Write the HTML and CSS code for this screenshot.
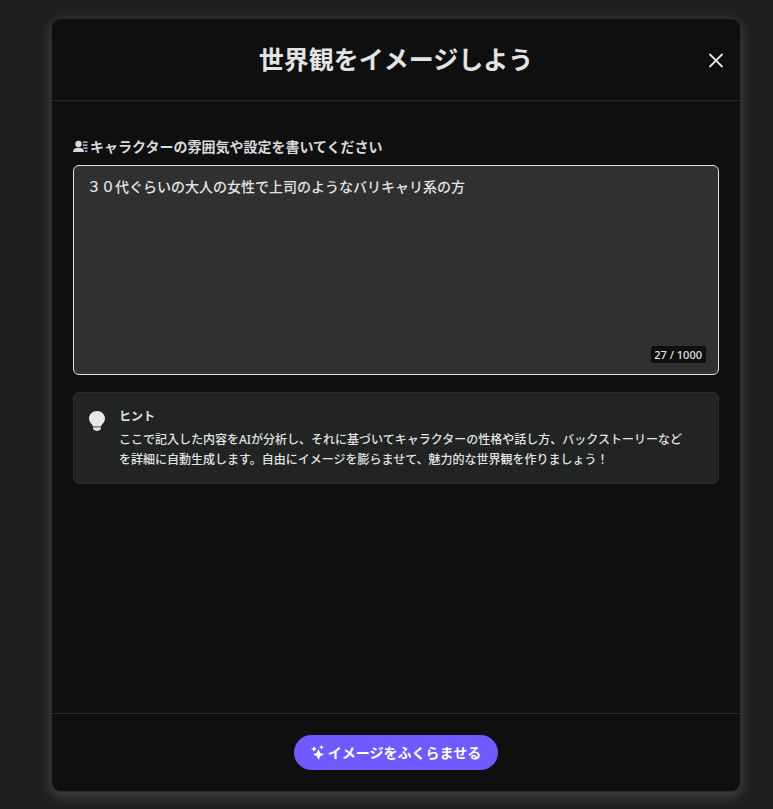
FILE: index.html
```html
<!DOCTYPE html>
<html lang="ja">
<head>
  <meta charset="utf-8">
  <meta name="viewport" content="width=device-width, initial-scale=1">
  <title>世界観をイメージしよう</title>
  <link rel="stylesheet" href="styles.css">
</head>
<body>
  <div class="modal" role="dialog" aria-labelledby="modalTitle">
    <header class="modal-header">
      <h1 id="modalTitle">世界観をイメージしよう</h1>
      <button type="button" class="close-btn" aria-label="閉じる">
        <svg viewBox="0 0 16 16" width="16" height="16" fill="none" stroke="currentColor" stroke-width="1.8">
          <path d="M1.500 2l13 13M14.500 2l-13 13"/>
        </svg>
      </button>
    </header>

    <main class="modal-body">
      <label for="worldview" class="field-label">
        <svg viewBox="0 0 15 14" width="15" height="14" fill="currentColor">
          <circle cx="5.500" cy="4" r="3.200"/>
          <path d="M0 12c0-3 2.500-4.300 5.500-4.300S11 9 11 12z"/>
          <path d="M9.800 1.500H14.500v1.300H9.800zM9.800 4.500H14.500v1.300H9.800zM10.500 7.500h4v1.300h-4zM12 10.500h2.500v1.300H12z"/>
        </svg>
        キャラクターの雰囲気や設定を書いてください
      </label>
      <div class="textarea-wrap">
        <textarea id="worldview" maxlength="1000">３０代ぐらいの大人の女性で上司のようなバリキャリ系の方</textarea>
        <span class="counter">27 / 1000</span>
      </div>

      <section class="hint">
        <svg class="hint-icon" viewBox="0 0 16 20" width="16" height="20">
          <path fill="#e6e7e9" d="M8 0C3.500 0 0 3.400 0 7.600c0 2.600 1.500 4.300 2.900 5.900.7.700 1 1.300 1.100 2h8c.1-.7.400-1.300 1.100-2C14.500 11.900 16 10.200 16 7.600 16 3.400 12.500 0 8 0z"/>
          <path fill="#9a9c9c" d="M4 15.500h8V17H4z"/>
          <path fill="#e6e7e9" d="M4 17h8c0 1.200-.6 2-2 2.200-.4.500-1 .800-2 .800s-1.600-.3-2-.8C4.600 19 4 18.200 4 17z"/>
        </svg>
        <div class="hint-text">
          <h2>ヒント</h2>
          <p>ここで記入した内容をAIが分析し、それに基づいてキャラクターの性格や話し方、バックストーリーなどを詳細に自動生成します。自由にイメージを膨らませて、魅力的な世界観を作りましょう！</p>
        </div>
      </section>
    </main>

    <footer class="modal-footer">
      <button type="button" class="submit-btn">
        <svg viewBox="0 0 14 16" width="14" height="16" fill="currentColor">
          <path d="M7.500 5L9.200 8.800 13 10.500l-3.800 1.700L7.500 16l-1.700-3.800L2 10.500l3.800-1.700z"/>
          <path d="M3 2l.9 2.100L6 5l-2.100.9L3 8l-.9-2.100L0 5l2.100-.9zM10.500 1l.700 1.600 1.600.7-1.600.7-.7 1.600-.7-1.600-1.600-.7 1.600-.7z"/>
        </svg>
        イメージをふくらませる
      </button>
    </footer>
  </div>
</body>
</html>
```

FILE: styles.css
```css
* {
  box-sizing: border-box;
}

body {
  margin: 0;
  padding: 18px 32px 17px 51px;
  min-height: 100vh;
  display: flex;
  background: #1f1f1f;
  color: #e2e3e5;
  font-family: "Noto Sans", "Noto Sans CJK JP", sans-serif;
  font-size: 14px;
}

h1, h2, p {
  margin: 0;
}

svg {
  flex-shrink: 0;
}

button, textarea {
  font-family: inherit;
  font-size: 14px;
}

.modal {
  flex: 1;
  display: flex;
  flex-direction: column;
  background: #0f0f0f;
  border: 1px solid #2b2b2b;
  border-radius: 10px;
  box-shadow: 0 4px 14px rgba(255, 255, 255, 0.18);
}

.modal-header {
  display: grid;
  grid-template-columns: 32px 1fr 32px;
  align-items: center;
  padding: 20px 8px;
  border-bottom: 1px solid #2b2b2b;
}

.modal-header h1 {
  grid-column: 2;
  text-align: center;
  font-size: 25px;
  font-weight: 700;
  line-height: 41px;
}

.close-btn {
  display: flex;
  align-items: center;
  justify-content: center;
  height: 32px;
  padding: 0;
  border: none;
  background: none;
  color: #e2e3e5;
  cursor: pointer;
}

.modal-body {
  flex: 1;
  padding: 36px 21px 20px;
}

.field-label {
  display: flex;
  align-items: center;
  gap: 2px;
  margin-bottom: 8px;
  color: #d8d9dc;
  font-weight: 700;
  line-height: 20px;
}

.textarea-wrap {
  position: relative;
  margin-bottom: 17px;
}

textarea {
  display: block;
  width: 100%;
  height: 210px;
  padding: 11px 13px;
  border: 1px solid #e2e3e5;
  border-radius: 6px;
  background: #303030;
  color: #e2e3e5;
  font-weight: 500;
  line-height: 20px;
  resize: none;
  outline: none;
}

.counter {
  position: absolute;
  right: 13px;
  bottom: 12px;
  padding: 0 4px 0 3px;
  border-radius: 3px;
  background: #0f0f0f;
  font-size: 11px;
  font-weight: 500;
  line-height: 17px;
}

.hint {
  display: flex;
  gap: 14px;
  padding: 14px 28px 13px 15px;
  border: 1px solid #2b2b2b;
  border-radius: 6px;
  background: #212423;
}

.hint-icon {
  margin-top: 4px;
}

.hint h2 {
  margin-bottom: 3px;
  font-size: 12px;
  font-weight: 700;
  line-height: 20px;
}

.hint p {
  font-size: 12px;
  font-weight: 500;
  line-height: 20px;
}

.modal-footer {
  display: flex;
  justify-content: center;
  padding: 21px;
  border-top: 1px solid #2b2b2b;
}

.submit-btn {
  display: flex;
  align-items: center;
  gap: 3px;
  height: 35px;
  padding: 0 17px 1px;
  border: none;
  border-radius: 18px;
  background: #705aff;
  color: #fff;
  font-weight: 700;
  cursor: pointer;
}
```
